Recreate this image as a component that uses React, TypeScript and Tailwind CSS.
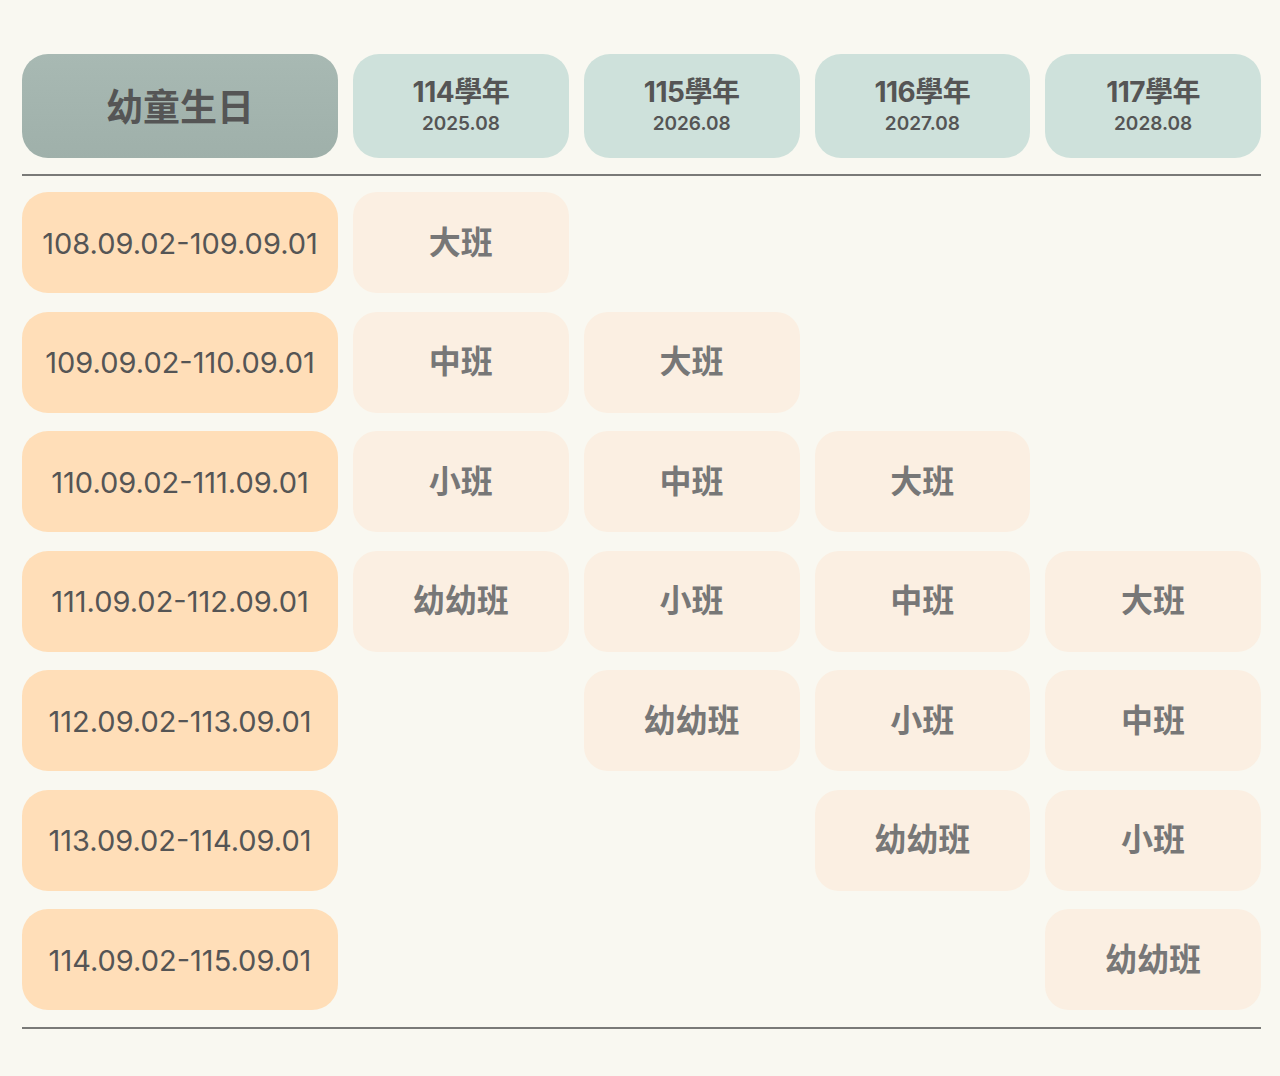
import React from "react";

const years = [
  { y: "114學年", d: "2025.08" },
  { y: "115學年", d: "2026.08" },
  { y: "116學年", d: "2027.08" },
  { y: "117學年", d: "2028.08" },
];

const rows: { date: string; cells: (string | null)[] }[] = [
  { date: "108.09.02-109.09.01", cells: ["大班", null, null, null] },
  { date: "109.09.02-110.09.01", cells: ["中班", "大班", null, null] },
  { date: "110.09.02-111.09.01", cells: ["小班", "中班", "大班", null] },
  { date: "111.09.02-112.09.01", cells: ["幼幼班", "小班", "中班", "大班"] },
  { date: "112.09.02-113.09.01", cells: [null, "幼幼班", "小班", "中班"] },
  { date: "113.09.02-114.09.01", cells: [null, null, "幼幼班", "小班"] },
  { date: "114.09.02-115.09.01", cells: [null, null, null, "幼幼班"] },
];

const font = { fontFamily: 'Inter, "Noto Sans CJK TC", "Noto Sans", sans-serif' };

export default function App() {
  return (
    <div className="min-h-[1076px] w-[1280px] bg-[#f9f8f1]" style={font}>
      <div className="ml-[22px] w-[1239px] pt-[54px]">
        <div className="grid grid-cols-[316px_repeat(4,1fr)] gap-x-[15px]">
          <div className="flex h-[104px] items-center justify-center rounded-[26px] bg-gradient-to-b from-[#a8b9b3] to-[#9fb0aa] pt-[3px] text-[37px] font-bold text-[#555555]">
            幼童生日
          </div>
          {years.map((y) => (
            <div
              key={y.y}
              className="flex h-[104px] flex-col items-center justify-center rounded-[26px] bg-[#cee1db] text-[#555555]"
            >
              <div className="text-[28px] font-bold leading-[34px] tracking-[-0.5px]">{y.y}</div>
              <div className="mt-[2px] text-[19px] font-semibold leading-[26px]">{y.d}</div>
            </div>
          ))}
        </div>
        <div className="mt-[16px] h-[2px] bg-[#7a7a78]" />
        <div className="mt-[16px] grid grid-cols-[316px_repeat(4,1fr)] gap-x-[15px] gap-y-[18.5px]">
          {rows.map((r) => (
            <React.Fragment key={r.date}>
              <div className="flex h-[101px] items-center justify-center rounded-[26px] bg-[#ffdeb8] pt-[2px] text-[29px] font-normal text-[#555555]">
                {r.date}
              </div>
              {r.cells.map((c, i) =>
                c ? (
                  <div
                    key={i}
                    className="flex h-[101px] items-center justify-center rounded-[24px] bg-[#fbefe2] text-[32px] font-bold text-[#777777]"
                  >
                    {c}
                  </div>
                ) : (
                  <div key={i} className="h-[101px]" />
                )
              )}
            </React.Fragment>
          ))}
        </div>
        <div className="mt-[17px] h-[2px] bg-[#7a7a78]" />
      </div>
    </div>
  );
}
